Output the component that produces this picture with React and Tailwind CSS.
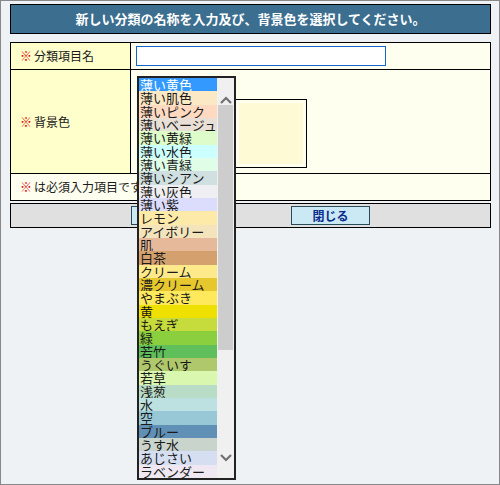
const colors = [
  ['薄い黄色', '#3399ff'],
  ['薄い肌色', '#fbe8c4'],
  ['薄いピンク', '#ffd9c0'],
  ['薄いベージュ', '#e8e0d6'],
  ['薄い黄緑', '#ddfcca'],
  ['薄い水色', '#ccffff'],
  ['薄い青緑', '#e0fde8'],
  ['薄いシアン', '#d0e0e0'],
  ['薄い灰色', '#efeef0'],
  ['薄い紫', '#dcdcfd'],
  ['レモン', '#feeaa8'],
  ['アイボリー', '#f3e4bc'],
  ['肌', '#e6b99a'],
  ['白茶', '#d4a06e'],
  ['クリーム', '#feea8a'],
  ['濃クリーム', '#e6c82e'],
  ['やまぶき', '#fee85c'],
  ['黄', '#eee000'],
  ['もえぎ', '#c6dc3c'],
  ['緑', '#8bcf3e'],
  ['若竹', '#5fbf5a'],
  ['うぐいす', '#b0c86c'],
  ['若草', '#d9f7ae'],
  ['浅葱', '#b8dcc6'],
  ['水', '#bde0e0'],
  ['空', '#98c8d6'],
  ['ブルー', '#6090b6'],
  ['うす水', '#c8d4cc'],
  ['あじさい', '#d6dff2'],
  ['ラベンダー', '#efe8f2'],
]

function Req() {
  return <span className="text-[#e00000] mr-[2px]">※</span>
}

export default function App() {
  return (
    <div className="relative w-[500px] h-[485px] border border-[#888888] bg-[#eef2f5] font-['Noto_Sans_CJK_JP',sans-serif] text-[#1a1a1a]">
      {/* header */}
      <div className="ml-[9px] mt-[3px] w-[481px] h-[30px] border border-black bg-[#3b6e8f] flex items-center justify-center text-white font-bold text-[13px]">
        新しい分類の名称を入力及び、背景色を選択してください。
      </div>

      {/* form table */}
      <div className="ml-[9px] mt-[8px] w-[481px] border border-black">
        <div className="flex h-[27px] border-b border-black">
          <div className="w-[120px] border-r border-black bg-[#ffffcc] flex items-center pl-[9px] text-[12px]">
            <Req />分類項目名
          </div>
          <div className="flex-1 bg-[#fffff0] pl-[5px] pt-[3px]">
            <input className="block w-[250px] h-[20px] border border-[#1566cc] bg-white outline-none" />
          </div>
        </div>
        <div className="flex h-[104px] border-b border-black">
          <div className="w-[120px] border-r border-black bg-[#ffffcc] flex items-center pl-[9px] text-[12px]">
            <Req />背景色
          </div>
          <div className="flex-1 bg-[#fffff0] pl-[104px] pt-[29px]">
            <div className="w-[72px] h-[69px] border border-black bg-[#fffff0] p-[3px]">
              <div className="w-full h-full bg-[#fffad6]"></div>
            </div>
          </div>
        </div>
        <div className="h-[26px] bg-[#fffff0] flex items-center pl-[9px] text-[12px]">
          <Req />は必須入力項目です。
        </div>
      </div>

      {/* buttons */}
      <div className="ml-[9px] mt-[2px] w-[481px] h-[25px] border border-black bg-[#e0e0e0] flex items-center justify-center gap-[81px]">
        <button className="w-[79px] h-[19px] border border-[#2a4a5a] bg-[#cae9f5] text-[#0b2a8a] font-bold text-[12px] leading-none">
          登録
        </button>
        <button className="w-[79px] h-[19px] border border-[#2a4a5a] bg-[#cae9f5] text-[#0b2a8a] font-bold text-[12px] leading-none">
          閉じる
        </button>
      </div>

      {/* opened select list */}
      <div className="absolute left-[136px] top-[75px] w-[99px] h-[404px] border-2 border-[#222] flex bg-[#f0f0f0]">
        <div className="w-[78px] flex flex-col">
          {colors.map(([name, bg], i) => (
            <div
              key={name}
              className={'h-[13.333px] text-[13px] leading-[13.333px] pl-[1px] whitespace-nowrap overflow-x-clip ' + (i === 0 ? 'text-white' : 'text-[#1a1a1a]')}
              style={{ backgroundColor: bg }}
            >
              {name}
            </div>
          ))}
        </div>
        <div className="w-[17px] flex flex-col items-center bg-[#f0f0f0]">
          <svg width="12" height="8" viewBox="0 0 12 8" className="mt-[18px]">
            <path d="M1 7 L6 2 L11 7" stroke="#707070" strokeWidth="2.2" fill="none" />
          </svg>
          <div className="w-[15px] h-[245px] bg-[#cdcdcd] mt-[1px]"></div>
          <svg width="12" height="8" viewBox="0 0 12 8" className="mt-[104px]">
            <path d="M1 1 L6 6 L11 1" stroke="#707070" strokeWidth="2.2" fill="none" />
          </svg>
        </div>
      </div>
    </div>
  )
}
